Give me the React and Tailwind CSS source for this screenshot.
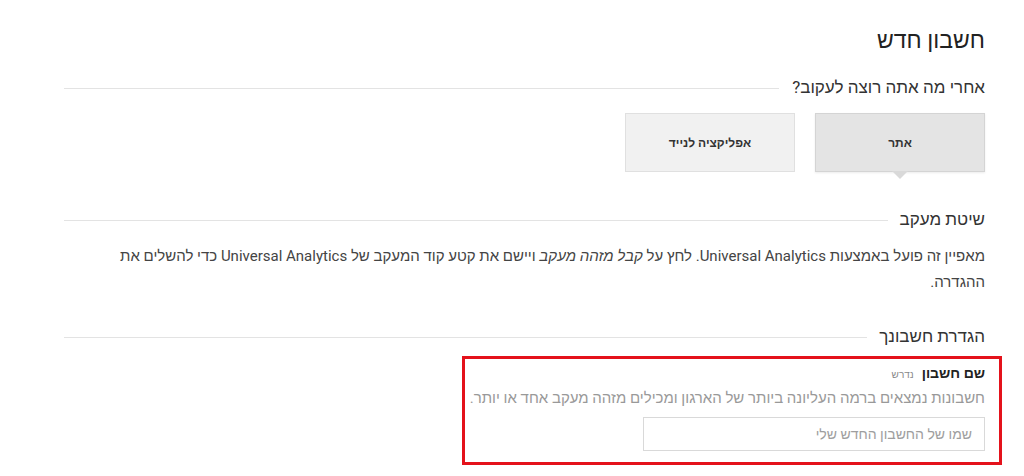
import React, { useState } from 'react';

function SectionHeading({ children, gap = 'gap-[13px]' }) {
  return (
    <div className={`flex items-center ${gap}`}>
      <h3 className="text-[17px] leading-[24px] text-[#333] whitespace-nowrap">{children}</h3>
      <div className="flex-1 h-px bg-[#e3e3e3] mt-[3px]"></div>
    </div>
  );
}

export default function App() {
  const [kind, setKind] = useState('web');
  const [name, setName] = useState('');

  return (
    <div
      dir="rtl"
      className="w-[1024px] h-[476px] overflow-hidden bg-white pt-[27px] pr-[39px] pl-16 text-[#333]"
      style={{ fontFamily: "Roboto, 'Liberation Sans', Arial, sans-serif" }}
    >
      {/* כותרת */}
      <h1 className="text-[23px] leading-[28px] text-[#222]">חשבון חדש</h1>

      {/* מה לעקוב */}
      <div className="mt-[20px]">
        <SectionHeading>אחרי מה אתה רוצה לעקוב?</SectionHeading>
        <div className="flex gap-5 mt-[14px]">
          {[
            { id: 'web', label: 'אתר' },
            { id: 'app', label: 'אפליקציה לנייד' },
          ].map((opt) => {
            const active = kind === opt.id;
            return (
              <button
                key={opt.id}
                onClick={() => setKind(opt.id)}
                className={
                  'relative w-[170px] h-[59px] text-[12px] font-bold text-[#333] border ' +
                  (active
                    ? 'bg-[#e4e4e4] border-[#d4d4d4] shadow-[0_1px_2px_rgba(0,0,0,0.08)]'
                    : 'bg-[#f1f1f1] border-[#e0e0e0]')
                }
              >
                {opt.label}
                {active && (
                  <span className="absolute left-1/2 -translate-x-1/2 top-full w-0 h-0 border-l-[8px] border-r-[8px] border-t-[8px] border-l-transparent border-r-transparent border-t-[#d9d9d9]"></span>
                )}
              </button>
            );
          })}
        </div>
      </div>

      {/* שיטת מעקב */}
      <div className="mt-[35px]">
        <SectionHeading gap="gap-[12px]">שיטת מעקב</SectionHeading>
        <p className="mt-[12px] text-[15px] leading-[26px] text-[#444] max-w-[890px]">
          מאפיין זה פועל באמצעות Universal Analytics. לחץ על <i>קבל מזהה מעקב</i> ויישם את קטע קוד המעקב של Universal Analytics כדי להשלים את ההגדרה.
        </p>
      </div>

      {/* הגדרת חשבונך */}
      <div className="mt-[29px]">
        <SectionHeading gap="gap-[12px]">הגדרת חשבונך</SectionHeading>
        <div className="mt-[8px] -mr-[17px] w-[540px] border-[3px] border-[#e4121b] pr-[14px] pl-[8px] pt-[4px] pb-[11px]">
          <div className="flex items-baseline gap-[8px] leading-[20px]">
            <span className="text-[14px] font-bold text-[#222]">שם חשבון</span>
            <span className="text-[10px] text-[#888]">נדרש</span>
          </div>
          <p className="mt-[3px] text-[15px] leading-[20px] text-[#999] whitespace-nowrap">
            חשבונות נמצאים ברמה העליונה ביותר של הארגון ומכילים מזהה מעקב אחד או יותר.
          </p>
          <input
            type="text"
            value={name}
            onChange={(e) => setName(e.target.value)}
            placeholder="שמו של החשבון החדש שלי"
            className="mt-[9px] block w-[342px] h-[34px] border border-[#d9d9d9] px-3 text-[14px] text-[#333] placeholder:text-[#9e9e9e] focus:outline-none"
          />
        </div>
      </div>
    </div>
  );
}
